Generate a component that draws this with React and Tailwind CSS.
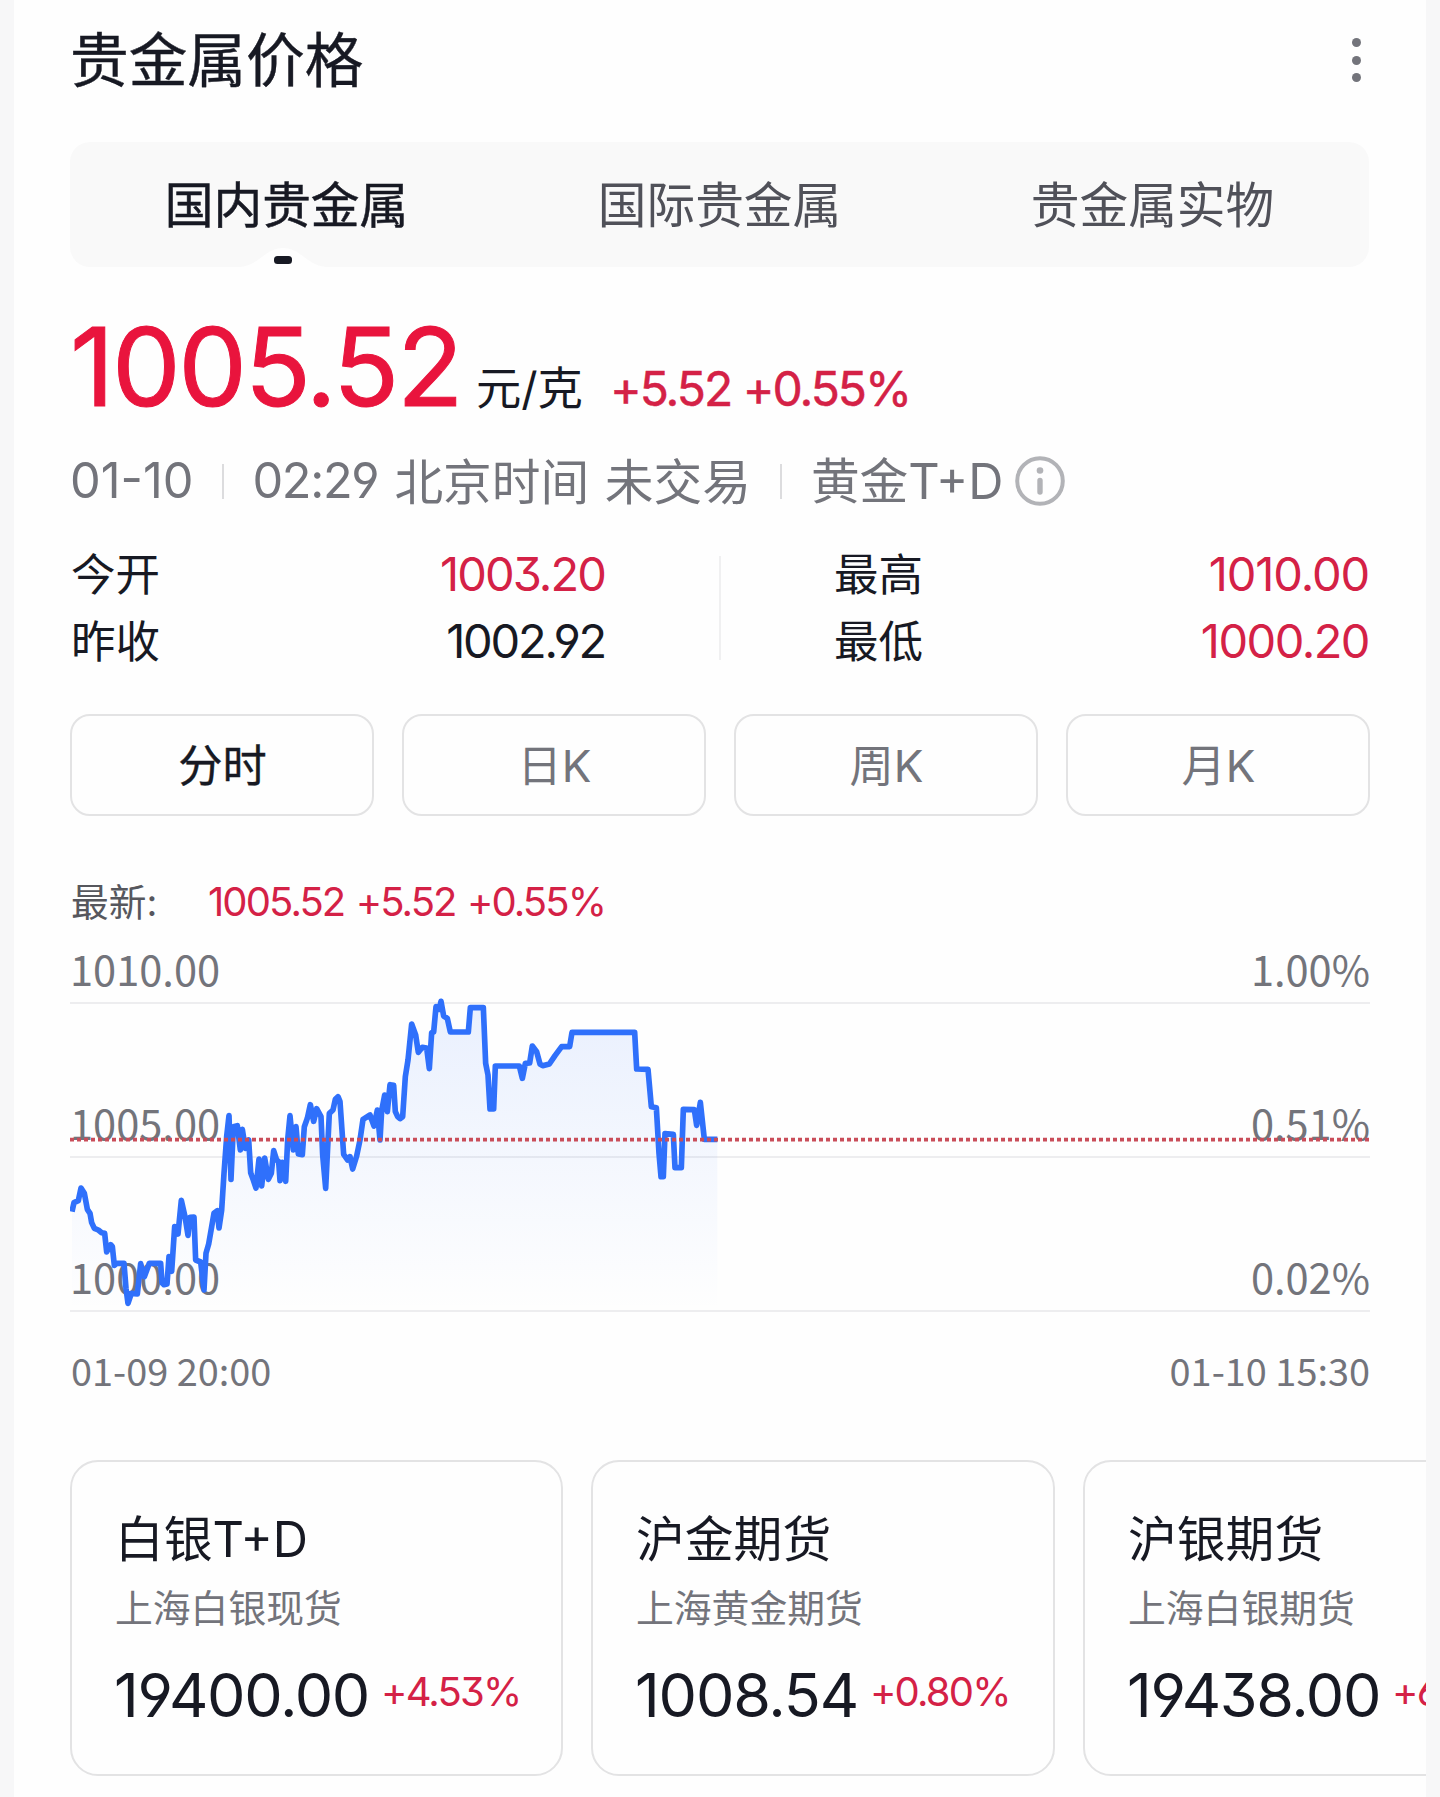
import React, { useState } from 'react';
import clsx from 'clsx';

const tabs = ['国内贵金属', '国际贵金属', '贵金属实物'];
const periods = ['分时', '日K', '周K', '月K'];

const products = [
  { name: '白银T+D', desc: '上海白银现货', price: '19400.00', change: '+4.53%', width: 'w-[493px]', tracking: 'tracking-[-1.3px]' },
  { name: '沪金期货', desc: '上海黄金期货', price: '1008.54', change: '+0.80%', width: 'w-[464px]', tracking: 'tracking-[-1.2px]' },
  { name: '沪银期货', desc: '上海白银期货', price: '19438.00', change: '+6', width: 'w-[493px]', tracking: 'tracking-[-1.4px]' },
];

const axis = [
  { price: '1010.00', percent: '1.00%', height: 'h-[78px]' },
  { price: '1005.00', percent: '0.51%', height: 'h-[154px]' },
  { price: '1000.00', percent: '0.02%', height: 'h-[154px]' },
];

// Intraday points, in the units of the chart's 3900 x 1080 viewBox
const points = [
  [6, 755], [12, 728], [25, 722], [33, 684], [43, 700], [52, 748], [60, 760], [65, 788], [73, 805],
  [85, 810], [95, 818], [104, 820], [110, 876], [122, 854], [127, 860], [133, 916], [140, 910],
  [162, 910], [168, 985], [174, 1030], [184, 1000], [202, 1002], [212, 911], [223, 950], [238, 910],
  [272, 910], [276, 968], [282, 974], [291, 972], [297, 890], [305, 934], [314, 800], [324, 822],
  [334, 721], [345, 770], [354, 826], [360, 772], [372, 771], [377, 900], [392, 906], [402, 990],
  [408, 880], [416, 852], [425, 800], [432, 760], [442, 752], [447, 804], [455, 750], [462, 640],
  [470, 530], [477, 467], [483, 658], [490, 500], [502, 497], [511, 570], [517, 508], [526, 565],
  [536, 540], [542, 638], [550, 660], [558, 684], [567, 597], [575, 678], [584, 594], [595, 658],
  [604, 640], [611, 572], [620, 600], [626, 605], [630, 662], [637, 607], [647, 664], [653, 540],
  [660, 467], [670, 570], [678, 500], [685, 582], [697, 584], [703, 500], [712, 475], [721, 434],
  [731, 484], [740, 446], [753, 470], [758, 585], [767, 685], [778, 460], [789, 450], [796, 418],
  [804, 410], [810, 425], [821, 583], [833, 600], [840, 590], [848, 627], [860, 588], [870, 540],
  [879, 478], [900, 465], [912, 498], [922, 450], [930, 540], [935, 452], [944, 405], [952, 455],
  [960, 374], [971, 376], [976, 455], [983, 470], [990, 476], [998, 470], [1006, 350], [1014, 300],
  [1025, 192], [1037, 225], [1045, 277], [1057, 262], [1070, 264], [1078, 326], [1085, 218],
  [1091, 216], [1098, 140], [1107, 148], [1113, 124], [1121, 168], [1132, 175], [1141, 216],
  [1195, 216], [1201, 143], [1240, 143], [1247, 310], [1254, 345], [1260, 447], [1271, 447],
  [1276, 318], [1348, 318], [1357, 355], [1366, 310], [1379, 309], [1387, 258], [1400, 275],
  [1410, 312], [1418, 317], [1438, 312], [1455, 287], [1475, 260], [1499, 260], [1506, 217],
  [1694, 217], [1700, 327], [1734, 328], [1744, 440], [1759, 443], [1767, 580], [1773, 650],
  [1780, 650], [1785, 521], [1810, 523], [1815, 623], [1834, 623], [1840, 448], [1873, 449],
  [1880, 496], [1891, 427], [1903, 538], [1942, 538],
];

const line = points.map(([x, y]) => `${x},${y}`).join(' ');

const Stat = ({ label, value, up, tracking }) => (
  <div className="flex h-[67px] items-center justify-between">
    <span className="pt-[2px] text-[44.5px] leading-none text-[#171923]">{label}</span>
    <span className={clsx('pb-[2px] text-[47px] leading-none', tracking, up ? 'text-[#d42146]' : 'text-[#171923]')}>
      {value}
    </span>
  </div>
);

const PriceChart = () => (
  <div className="relative font-['Noto_Sans_CJK_SC',sans-serif] text-[41.6px] text-[#73747b]">
    {axis.map((row) => (
      <div key={row.price} className={clsx('flex items-end justify-between border-b-2 border-[#ededef] pb-[4px]', row.height)}>
        <span className="leading-[60px]">{row.price}</span>
        <span className="leading-[60px]">{row.percent}</span>
      </div>
    ))}
    <svg className="absolute left-0 top-[34px] h-[360px] w-[1300px]" viewBox="0 0 3900 1080" fill="none">
      <defs>
        <linearGradient id="area" x1="0" y1="120" x2="0" y2="1052" gradientUnits="userSpaceOnUse">
          <stop stopColor="#2f70fb" stopOpacity="0.1" />
          <stop offset="1" stopColor="#2f70fb" stopOpacity="0" />
        </linearGradient>
      </defs>
      <polygon points={`6,1052 ${line} 1942,1052`} fill="url(#area)" />
      <polyline points={line} stroke="#2f70fb" strokeWidth="17" strokeLinejoin="round" />
      <path d="M0 539H3900" stroke="#c94d59" strokeWidth="11" strokeDasharray="12 9" />
    </svg>
  </div>
);

const ProductCard = ({ item }) => (
  <div className={clsx('h-[316px] shrink-0 rounded-[28px] border-2 border-[#e3e3e4] pl-[43px] pt-[48px]', item.width)}>
    <div className="text-[48.8px] leading-[60px] text-[#171923]">{item.name}</div>
    <div className="mt-[10px] text-[37.8px] leading-[56px] text-[#73747b]">{item.desc}</div>
    <div className="-ml-px mt-[27px] flex items-center whitespace-nowrap">
      <span className={clsx('text-[61px] leading-[64px] text-[#171923]', item.tracking)}>{item.price}</span>
      <span className="mb-[6px] ml-[12px] text-[40px] leading-none tracking-[-1.8px] text-[#d42146]">{item.change}</span>
    </div>
  </div>
);

export default function App() {
  const [tab, setTab] = useState(0);
  const [period, setPeriod] = useState(0);

  return (
    <div className="h-[1797px] w-[1440px] overflow-hidden bg-[#f7f7f8] px-[14px] font-['Inter','Noto_Sans_CJK_SC',sans-serif] [font-feature-settings:'cv03','cv04','cv09']">
      <div className="h-full overflow-hidden bg-[#fefefe] px-[56px]">
        {/* Header */}
        <div className="flex h-[116px] items-center justify-between">
          <h1 className="pt-[6px] text-[58.7px] leading-none text-[#171923] [-webkit-text-stroke:0.4px]">贵金属价格</h1>
          <div className="mr-[9px] mt-[4px] flex flex-col gap-[8.5px]">
            <span className="size-[9px] rounded-full bg-[#73747b]" />
            <span className="size-[9px] rounded-full bg-[#73747b]" />
            <span className="size-[9px] rounded-full bg-[#73747b]" />
          </div>
        </div>

        {/* Market tabs */}
        <div className="mr-px mt-[26px] grid h-[125px] grid-cols-3 rounded-[20px] bg-[#f9f9f9]">
          {tabs.map((name, i) => (
            <button
              key={name}
              onClick={() => setTab(i)}
              className={clsx(
                'relative pt-[4px] text-[48.7px] leading-none',
                i === tab ? 'text-[#171923] [-webkit-text-stroke:0.5px]' : 'text-[#505159]'
              )}
            >
              {name}
              {i === tab && (
                <svg className="absolute bottom-0 left-[170px] h-[19px] w-[86px]" viewBox="0 0 86 19">
                  <path d="M0 19C20 17 25 0 43 0S66 17 86 19Z" fill="#fefefe" />
                  <rect x="34" y="8" width="18" height="8" rx="3.5" fill="#171923" />
                </svg>
              )}
            </button>
          ))}
        </div>

        {/* Current price */}
        <div className="mt-[45px] flex h-[108px] items-baseline">
          <span className="w-[406px] text-[109px] leading-[108px] tracking-[-2.4px] text-[#e9143d] [-webkit-text-stroke:1px]">1005.52</span>
          <span className="relative -top-px text-[45.3px] leading-none text-[#171923]">元/克</span>
          <span className="ml-[27px] text-[48px] leading-none tracking-[-2px] text-[#d42146] [-webkit-text-stroke:0.5px]">+5.52 +0.55%</span>
        </div>

        <div className="mt-[31px] flex h-[60px] items-center text-[48.7px] leading-none text-[#73747b]">
          <span className="pt-px">01-10</span>
          <span className="mx-[29px] h-[35px] w-[2px] bg-[#dcdcde]" />
          <span className="-ml-px pt-px tracking-[-1.3px]">02:29</span>
          <span className="ml-[16px] pt-[4px] [word-spacing:2px]">北京时间 未交易</span>
          <span className="ml-[29px] mr-[30px] h-[35px] w-[2px] bg-[#dcdcde]" />
          <span className="-ml-px pt-[3px]">黄金T+D</span>
          <svg className="ml-[12px] size-[50px]" viewBox="0 0 50 50" fill="none">
            <circle cx="25" cy="25" r="22.8" stroke="#b2b3b7" strokeWidth="4" />
            <circle cx="25" cy="14.5" r="3.3" fill="#b2b3b7" />
            <path d="M25 24.5V36" stroke="#b2b3b7" strokeWidth="5.4" strokeLinecap="round" />
          </svg>
        </div>

        {/* Open / close / high / low */}
        <div className="mt-[30px] flex items-center justify-between">
          <div className="w-[535px] pl-px">
            <Stat label="今开" value="1003.20" up tracking="tracking-[-1.9px]" />
            <Stat label="昨收" value="1002.92" tracking="tracking-[-2.2px]" />
          </div>
          <span className="h-[104px] w-[2px] bg-[#f0f0f1]" />
          <div className="w-[536px] pr-px">
            <Stat label="最高" value="1010.00" up tracking="tracking-[-1.1px]" />
            <Stat label="最低" value="1000.20" up tracking="tracking-[-1.5px]" />
          </div>
        </div>

        {/* Period switch */}
        <div className="mt-[39px] grid grid-cols-4 gap-[28px]">
          {periods.map((name, i) => (
            <button
              key={name}
              onClick={() => setPeriod(i)}
              className={clsx(
                'h-[102px] rounded-[20px] border-2 border-[#e3e3e4] pl-px pt-[2px] text-[44.2px] leading-none',
                i === period ? 'text-[#171923] [-webkit-text-stroke:0.4px]' : 'text-[#73747b]'
              )}
            >
              {name}
            </button>
          ))}
        </div>

        <div className="mt-[61px] flex h-[50px] items-center leading-none">
          <span className="w-[138px] pl-px pt-[2px] text-[37.7px] text-[#56575d]">最新:</span>
          <span className="text-[40px] tracking-[-1.9px] text-[#d42146] [word-spacing:2px]">1005.52 +5.52 +0.55%</span>
        </div>

        <div className="-mt-px">
          <PriceChart />
        </div>

        <div className="mt-[28px] flex h-[60px] items-center justify-between pl-px font-['Noto_Sans_CJK_SC',sans-serif] text-[37.9px] leading-none text-[#73747b]">
          <span>01-09 20:00</span>
          <span>01-10 15:30</span>
        </div>

        {/* Related products, scrolled off to the right */}
        <div className="-mr-[56px] mt-[60px] flex gap-[28px] overflow-hidden">
          {products.map((item) => (
            <ProductCard key={item.name} item={item} />
          ))}
        </div>
      </div>
    </div>
  );
}
